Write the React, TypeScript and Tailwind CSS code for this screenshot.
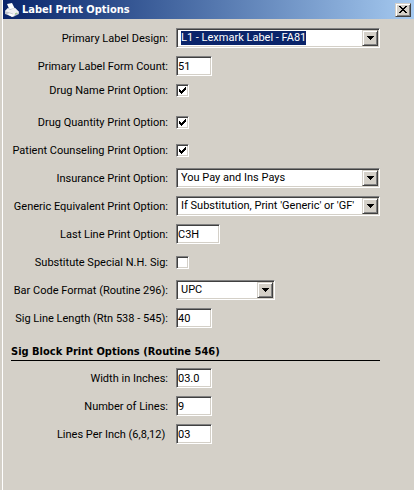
import { useState } from "react";
import type { ReactNode } from "react";
import clsx from "clsx";

const sunken =
  "border border-t-[#808080] border-l-[#808080] border-r-white border-b-white shadow-[inset_1px_1px_#404040,inset_-1px_-1px_#d4d0c8]";
const raised =
  "border border-t-[#d4d0c8] border-l-[#d4d0c8] border-r-[#404040] border-b-[#404040] shadow-[inset_1px_1px_#ffffff,inset_-1px_-1px_#808080]";
const boldFont = "font-['DejaVu_Sans_Condensed','DejaVu_Sans',sans-serif] font-bold";

function Row({ id, label, children }: { id: string; label: string; children: ReactNode }) {
  return (
    <div className="flex h-7 items-center gap-2">
      <label htmlFor={id} className="w-[164px] shrink-0 whitespace-pre pt-0.5 text-right">
        {label}
      </label>
      {children}
    </div>
  );
}

function TextRow({ id, label, value, width = "w-9" }: { id: string; label: string; value: string; width?: string }) {
  return (
    <Row id={id} label={label}>
      <input
        id={id}
        type="text"
        defaultValue={value}
        className={clsx("h-5 bg-white pl-px outline-none", sunken, width)}
      />
    </Row>
  );
}

function CheckRow({ id, label, checked = false }: { id: string; label: string; checked?: boolean }) {
  const [on, setOn] = useState(checked);
  return (
    <Row id={id} label={label}>
      <span className="relative flex">
        <input
          id={id}
          type="checkbox"
          checked={on}
          onChange={(e) => setOn(e.target.checked)}
          className={clsx("size-[13px] appearance-none bg-white", sunken)}
        />
        {on && (
          <svg viewBox="0 0 13 13" className="pointer-events-none absolute inset-0 size-[13px]" shapeRendering="crispEdges">
            <path d="M3 5h1v1h1v1h1v-1h1v-1h1v-1h1v-1h1v3h-1v1h-1v1h-1v1h-1v1h-1v-1h-1v-1h-1z" />
          </svg>
        )}
      </span>
    </Row>
  );
}

function SelectRow({
  id,
  label,
  options,
  width = "w-[204px]",
  highlighted = false,
}: {
  id: string;
  label: string;
  options: string[];
  width?: string;
  highlighted?: boolean;
}) {
  return (
    <Row id={id} label={label}>
      <span className={clsx("relative flex", width)}>
        <select
          id={id}
          className={clsx(
            "h-5 w-full appearance-none bg-white pl-1 pr-4 outline-none",
            sunken,
            highlighted &&
              "bg-[linear-gradient(#0a246a,#0a246a)] bg-[length:125px_14px] bg-[position:4px_2px] bg-no-repeat text-white",
          )}
        >
          {options.map((o) => (
            <option key={o} className="bg-white text-black">
              {o}
            </option>
          ))}
        </select>
        <span
          className={clsx(
            "pointer-events-none absolute inset-y-0.5 right-0.5 flex w-4 items-center justify-center bg-[#d4d0c8]",
            raised,
          )}
        >
          <svg viewBox="0 0 7 4" className="h-1 w-[7px]" shapeRendering="crispEdges">
            <path d="M0 0h7v1h-1v1h-1v1h-1v1h-1v-1h-1v-1h-1v-1h-1z" />
          </svg>
        </span>
      </span>
    </Row>
  );
}

function PrinterIcon() {
  return (
    <svg viewBox="0 0 16 16" className="size-4">
      <path d="M3 2l5-1 3 6-5 2z" fill="#ffffff" />
      <path d="M1 9l3-3 2 1 5-1 4 4v2l-6 3-8-3z" fill="#bfc2ca" />
      <path d="M1 9l3-3 2 2 5-2 4 4-5 3z" fill="#f0f0f2" />
      <path d="M3 12l3-1 5 2-3 2z" fill="#ffffff" />
      <path d="M3 10l6 2" stroke="#b5b9c3" strokeWidth=".6" />
      <path d="M11 12l2-1" stroke="#8cc87a" />
    </svg>
  );
}

export default function App() {
  return (
    <main className="min-h-screen bg-[#d4d0c8] pl-0.5 font-[Roboto,sans-serif] text-[11px] leading-4 text-black">
      <div className="min-h-screen border-l border-white">
        <header className="flex h-[19px] items-center gap-0.5 bg-linear-to-r from-[#0a246a] to-[#a6caf0] pl-px pr-[3px]">
          <PrinterIcon />
          <h1 className={clsx("flex-1 text-white", boldFont)}>Label Print Options</h1>
          <button
            type="button"
            aria-label="Close"
            className={clsx("flex h-3.5 w-4 items-center justify-center bg-[#d4d0c8]", raised)}
          >
            <svg viewBox="0 0 8 7" className="h-[7px] w-2" shapeRendering="crispEdges">
              <path d="M0 0h2v1h1v1h2v-1h1v-1h2v1h-1v1h-1v1h-1v1h1v1h1v1h1v1h-2v-1h-1v-1h-2v1h-1v1h-2v-1h1v-1h1v-1h1v-1h-1v-1h-1v-1h-1z" />
            </svg>
          </button>
        </header>

        <form className="pl-px pr-[34px] pt-[5px]">
          <SelectRow id="design" label="Primary Label Design:" options={["L1 - Lexmark Label - FA81"]} highlighted />
          <TextRow id="form-count" label="Primary Label Form Count:" value="51" />
          <div className="-mt-1 pb-1">
            <CheckRow id="drug-name" label="Drug Name Print Option:" checked />
          </div>
          <CheckRow id="drug-quantity" label="Drug Quantity Print Option:" checked />
          <CheckRow id="counseling" label="Patient Counseling Print Option:" checked />
          <SelectRow id="insurance" label="Insurance Print Option:" options={["You Pay and Ins Pays"]} />
          <SelectRow
            id="generic"
            label="Generic Equivalent Print Option:"
            options={["If Substitution, Print 'Generic' or 'GF'"]}
          />
          <TextRow id="last-line" label="Last Line Print Option:" value="C3H" width="w-11" />
          <CheckRow id="special-sig" label="Substitute Special N.H. Sig:" />
          <SelectRow id="bar-code" label="Bar Code Format (Routine 296):" options={["UPC"]} width="w-[99px]" />
          <TextRow id="sig-length" label="Sig Line Length (Rtn 538 - 545):" value="40" />

          <h2 className={clsx("mb-[3px] ml-[7px] mt-3 border-b border-black", boldFont)}>
            Sig Block Print Options (Routine 546)
          </h2>
          <TextRow id="sig-width" label="Width in Inches:" value="03.0" />
          <TextRow id="sig-lines" label="Number of Lines:" value="9" />
          <TextRow id="sig-lpi" label="Lines Per Inch (6,8,12) " value="03" />
        </form>
      </div>
    </main>
  );
}
